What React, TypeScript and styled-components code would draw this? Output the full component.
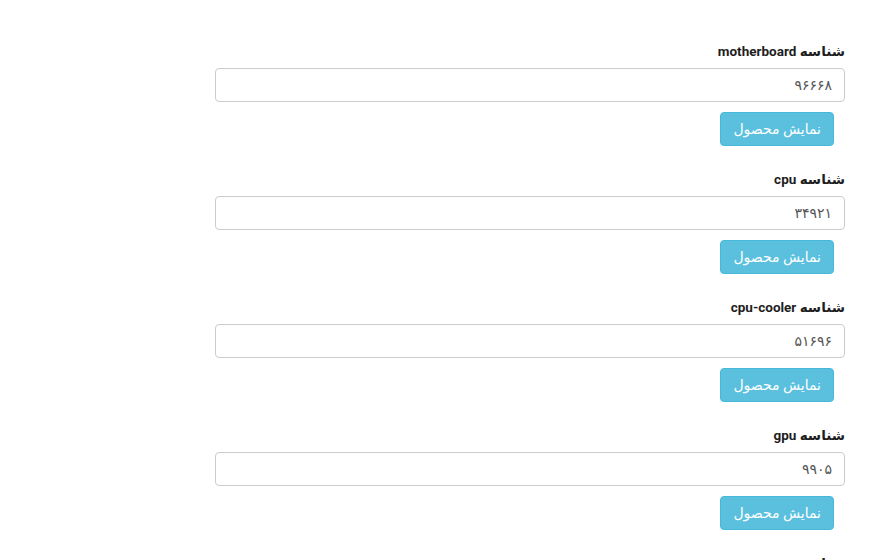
import React from "react";
import styled, { createGlobalStyle } from "styled-components";

const GlobalStyle = createGlobalStyle`
  html, body {
    margin: 0;
    padding: 0;
    background: #fff;
    font-family: Roboto, "DejaVu Sans", sans-serif;
    color: #333;
  }
`;

const Page = styled.div`
  display: flex;
  justify-content: flex-end;
  padding: 41px 30px 0 0;
  height: 560px;
  box-sizing: border-box;
  overflow: hidden;
`;

const Form = styled.form`
  width: 630px;
  direction: rtl;
  display: flex;
  flex-direction: column;
`;

const Group = styled.div`
  display: flex;
  flex-direction: column;
  align-items: flex-start;
  margin-bottom: 23px;
`;

const Label = styled.label`
  font-size: 13.5px;
  font-weight: 700;
  line-height: 20px;
  color: #1e1e1e;
  margin-bottom: 7px;
`;

const Input = styled.input`
  width: 100%;
  height: 34px;
  box-sizing: border-box;
  border: 1px solid #ccc;
  border-radius: 4px;
  padding: 6px 12px;
  font-size: 14px;
  font-family: Roboto, "DejaVu Sans", sans-serif;
  color: #555;
  direction: rtl;
  text-align: right;
  outline: none;
`;

const Button = styled.button`
  margin-top: 10px;
  margin-right: 11px;
  height: 34px;
  padding: 6px 12px;
  font-size: 14px;
  font-family: Roboto, "DejaVu Sans", sans-serif;
  color: #fff;
  background: #5bc0de;
  border: 1px solid #46b8da;
  border-radius: 4px;
  cursor: pointer;
`;

const parts = [
  { name: "motherboard", id: "۹۶۶۶۸" },
  { name: "cpu", id: "۳۴۹۲۱" },
  { name: "cpu-cooler", id: "۵۱۶۹۶" },
  { name: "gpu", id: "۹۹۰۵" },
  { name: "ram", id: "۴۱۲۳۰" },
];

export default function App() {
  return (
    <>
      <GlobalStyle />
      <Page>
        <Form onSubmit={(e) => e.preventDefault()}>
          {parts.map((p) => (
            <Group key={p.name}>
              <Label>شناسه {p.name}</Label>
              <Input defaultValue={p.id} readOnly />
              <Button type="button">نمایش محصول</Button>
            </Group>
          ))}
        </Form>
      </Page>
    </>
  );
}
